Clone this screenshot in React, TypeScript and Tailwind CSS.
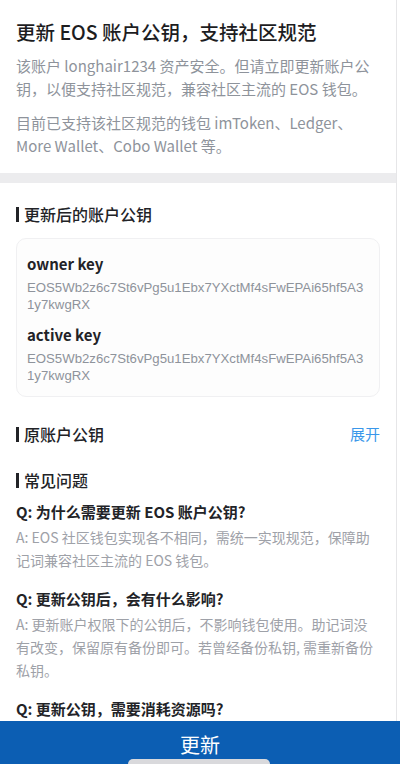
import React from "react";

const font = { fontFamily: '"Noto Sans CJK SC", "Noto Sans", sans-serif' };
const keyFont = { fontFamily: '"Liberation Sans", Arial, sans-serif' };

function SectionHeader({ title, right }: { title: string; right?: string }) {
  return (
    <div className="flex items-center justify-between h-[22px]">
      <div className="flex items-center gap-[5px]">
        <div className="w-[3px] h-[15px] bg-[#222327]" />
        <span className="text-[16px] leading-[22px] font-medium text-[#222327]">{title}</span>
      </div>
      {right && <span className="text-[15px] leading-[22px] text-[#3a97ea]">{right}</span>}
    </div>
  );
}

function KeyBlock({ label }: { label: string }) {
  return (
    <div>
      <div className="text-[15px] leading-[20px] font-semibold text-[#222327]">{label}</div>
      <div className="mt-[5px] text-[13.2px] leading-[17px] text-[#8e939b] whitespace-nowrap" style={keyFont}>
        EOS5Wb2z6c7St6vPg5u1Ebx7YXctMf4sFwEPAi65hf5A3
        <br />
        1y7kwgRX
      </div>
    </div>
  );
}

function QA({ q, a }: { q: string; a?: string }) {
  return (
    <div>
      <div className="text-[15px] leading-[20px] font-semibold text-[#222327]">{q}</div>
      {a && <div className="mt-[4px] text-[14px] leading-[23px] text-[#9ea1a8]">{a}</div>}
    </div>
  );
}

export default function App() {
  return (
    <div className="w-[400px] h-[764px] relative overflow-hidden bg-white flex flex-col" style={font}>
      <div className="flex-1 overflow-hidden border-r border-[#e6e6e8] mr-[3px]">
        <div className="px-4 pt-[18px] pb-[16px]">
          <h1 className="text-[19.5px] leading-[28px] font-medium text-[#1d1d1f]">更新 EOS 账户公钥，支持社区规范</h1>
          <p className="mt-[8px] text-[15px] leading-[23px] text-[#8e939b]">
            该账户 longhair1234 资产安全。但请立即更新账户公钥，以便支持社区规范，兼容社区主流的 EOS 钱包。
          </p>
          <p className="mt-[11px] text-[15px] leading-[23px] text-[#8e939b]">
            目前已支持该社区规范的钱包 imToken、Ledger、More Wallet、Cobo Wallet 等。
          </p>
        </div>
        <div className="h-[10px] bg-[#ececee]" />
        <div className="px-4 pt-[20px]">
          <SectionHeader title="更新后的账户公钥" />
          <div className="mt-[13px] rounded-[10px] border border-[#f0f0f2] bg-[#fdfdfd] pl-[10px] pr-[8px] pt-[15px] pb-[12px] flex flex-col gap-[12px]">
            <KeyBlock label="owner key" />
            <KeyBlock label="active key" />
          </div>
          <div className="mt-[26px]">
            <SectionHeader title="原账户公钥" right="展开" />
          </div>
          <div className="mt-[24px]">
            <SectionHeader title="常见问题" />
          </div>
          <div className="mt-[11px] flex flex-col gap-[17px]">
            <QA q="Q: 为什么需要更新 EOS 账户公钥?" a="A: EOS 社区钱包实现各不相同，需统一实现规范，保障助记词兼容社区主流的 EOS 钱包。" />
            <QA q="Q: 更新公钥后，会有什么影响?" a="A: 更新账户权限下的公钥后，不影响钱包使用。助记词没有改变，保留原有备份即可。若曾经备份私钥, 需重新备份私钥。" />
            <QA q="Q: 更新公钥，需要消耗资源吗?" />
          </div>
        </div>
      </div>
      <button className="h-[43px] w-full bg-[#0c5eb3] text-white text-[20px] leading-[28px] flex items-center justify-center pt-[5px]">
        更新
      </button>
      <div className="absolute bottom-0 left-[128px] w-[142px] h-[5px] rounded-t-full bg-[#d9d9dc]" />
    </div>
  );
}
